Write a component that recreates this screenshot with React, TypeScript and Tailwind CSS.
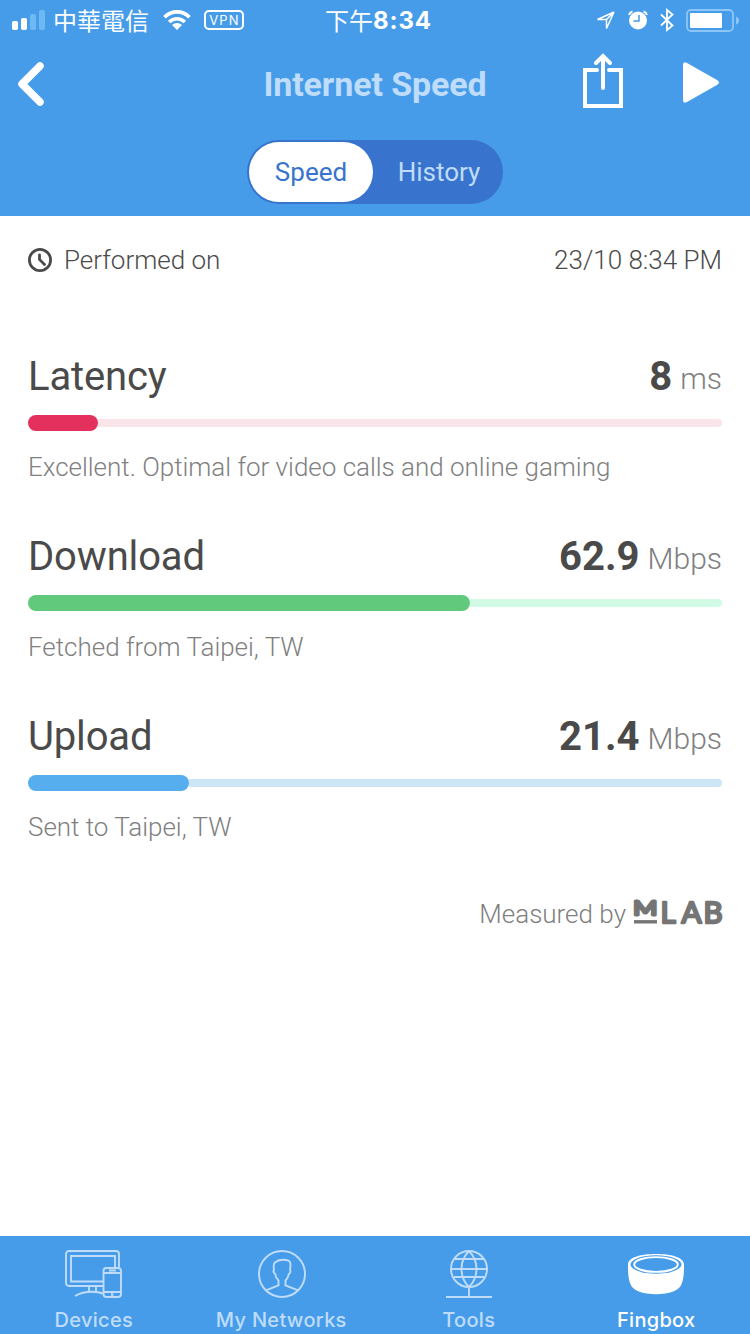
import React, { useState } from "react";

const metrics = [
  {
    name: "Latency",
    value: "8",
    unit: "ms",
    note: "Excellent. Optimal for video calls and online gaming",
    fill: 70,
    bar: "bg-[#e4305c]",
    track: "bg-[#f9e4ea]",
  },
  {
    name: "Download",
    value: "62.9",
    unit: "Mbps",
    note: "Fetched from Taipei, TW",
    fill: 442,
    bar: "bg-[#61c97b]",
    track: "bg-[#d1fbe5]",
  },
  {
    name: "Upload",
    value: "21.4",
    unit: "Mbps",
    note: "Sent to Taipei, TW",
    fill: 161,
    bar: "bg-[#56aeee]",
    track: "bg-[#cce6f8]",
  },
];

const DevicesIcon = () => (
  <svg width="58" height="50" viewBox="0 0 58 50" fill="none" stroke="currentColor" strokeWidth="1.9">
    <path d="M38 36H4a3 3 0 0 1-3-3V4a3 3 0 0 1 3-3h47a3 3 0 0 1 3 3v13" />
    <path d="M38 31.500H6V6h44v11" />
    <path d="M24 36v5.500M31 36v5.500M10 46c5-3 10-4.300 17-4.300s8 .6 11 2" />
    <rect x="38.500" y="18" width="17.500" height="29" rx="3" />
    <path d="M39 23h17M39 42h17M44 20.500h7" />
    <rect x="46" y="43.300" width="2.500" height="2.500" fill="currentColor" stroke="none" />
  </svg>
);

const NetworksIcon = () => (
  <svg className="ml-px" width="48" height="50" viewBox="0 0 48 50" fill="none" stroke="currentColor" strokeWidth="1.9">
    <circle cx="24" cy="24" r="23" />
    <path d="M8 40.300 20.500 35.300V30.500C18.500 28.500 17.500 26.500 17.200 24C15.600 23 15.300 21 16 19.700C15 14 16.500 12 18.500 11.700C21 9 30 9 32 12C33 15 32.300 17.500 32 19.700C32.800 21 32.400 23 30.800 24C30.500 26.500 29.500 28.500 27.500 30.500V35.300L40 40.300" />
  </svg>
);

const ToolsIcon = () => (
  <svg width="46" height="50" viewBox="0 0 46 50" fill="none" stroke="currentColor" strokeWidth="1.9">
    <circle cx="23" cy="19" r="18" />
    <path d="M23 1c-10 10-10 26 0 36M23 1c10 10 10 26 0 36M8 9h30M5 19h36M8 27h30M23 37v10M0 47h46" />
  </svg>
);

const FingboxIcon = () => (
  <svg width="56" height="50" viewBox="0 0 56 50" fill="none">
    <path d="M0 14C1 7 13 4 28 4s27 3 28 10c.2 6-.2 14-2 19-2 8-13 11.200-26 11.200S4 41 2 33C.2 28-.2 20 0 14Z" fill="white" />
    <ellipse cx="28" cy="14.500" rx="25.500" ry="9.300" fill="#469ce9" />
    <ellipse cx="28" cy="14.500" rx="21.800" ry="7.400" stroke="white" strokeWidth="1.900" />
  </svg>
);

const tabs = [
  { label: "Devices", icon: DevicesIcon },
  { label: "My Networks", icon: NetworksIcon },
  { label: "Tools", icon: ToolsIcon },
  { label: "Fingbox", icon: FingboxIcon },
];

const StatusBar = () => (
  <div className="grid h-10 grid-cols-3 items-center">
    <div className="flex items-center pl-3">
      <svg width="33" height="20" viewBox="0 0 33 20" fill="white">
        <rect y="11" width="6" height="9" rx="1.800" />
        <rect x="9" y="8" width="6" height="12" rx="1.800" />
        <rect x="18" y="4" width="6" height="16" rx="1.800" fill="#6cb9f3" />
        <rect x="27" width="6" height="20" rx="1.800" fill="#6cb9f3" />
      </svg>
      <span className="ml-2 font-['Noto_Sans_CJK_TC',sans-serif] text-2xl leading-10 whitespace-nowrap">
        中華電信
      </span>
      <svg className="ml-[14px]" width="28" height="20" viewBox="0 0 28 20" fill="none" stroke="white" strokeWidth="3.700">
        <path d="M1.500 7.200a17.500 17.500 0 0 1 25 0M6.200 12a11 11 0 0 1 15.600 0" />
        <path d="m14 20-5-5a7.200 7.200 0 0 1 10 0Z" fill="white" stroke="none" />
      </svg>
      <span className="ml-[13px] flex h-5 w-10 items-center justify-center rounded-[5px] border-2 border-white pl-px font-[Inter,sans-serif] text-[13px] leading-none tracking-[1.2px]">
        VPN
      </span>
    </div>
    <div className="flex items-center justify-center pl-[7px] whitespace-nowrap">
      <span className="font-['Noto_Sans_CJK_TC',sans-serif] text-2xl leading-10">下午</span>
      <span className="pt-0.5 font-[Inter,sans-serif] text-2xl leading-[38px] font-bold tracking-[0.9px]">8:34</span>
    </div>
    <div className="flex items-center justify-end pr-[11px]">
      <svg width="20" height="20" viewBox="0 0 20 20" fill="none" stroke="white" strokeWidth="1.500">
        <path d="M18 2 1.500 9.500h9v9L18 2l-7.500 7.500" />
      </svg>
      <svg className="ml-3" width="20" height="20" viewBox="0 0 20 20">
        <circle cx="10" cy="10.500" r="9" fill="white" />
        <path d="M11 5v6H5.500" fill="none" stroke="#469ce9" strokeWidth="1.500" />
        <path d="M1 5a5 5 0 0 1 3.500-3.500M19 5a5 5 0 0 0-3.500-3.500" fill="none" stroke="white" strokeWidth="2" />
      </svg>
      <svg className="ml-3" width="14" height="24" viewBox="0 0 14 24" fill="none" stroke="white" strokeWidth="1.800">
        <path d="m1 6.500 11.500 11L7 22V2l5.500 4.500L1 17.500" />
      </svg>
      <svg className="mt-px ml-3" width="53" height="24" viewBox="0 0 53 24">
        <rect x="1" y="1" width="46" height="21" rx="4" fill="none" stroke="#8bc6f7" strokeWidth="1.800" />
        <rect x="4" y="4" width="32" height="15" rx="1" fill="white" />
        <path d="M50 7.500q3 1 3 4t-3 4Z" fill="#8bc6f7" />
      </svg>
    </div>
  </div>
);

const App = () => {
  const [view, setView] = useState("Speed");
  const [activeTab, setActiveTab] = useState("Fingbox");

  return (
    <div className="flex h-[1334px] w-[750px] flex-col overflow-hidden bg-white font-[Roboto,sans-serif] text-[#4a4a4a]">
      {/* Header */}
      <header className="h-[216px] shrink-0 bg-[#469ce9] text-white">
        <StatusBar />
        <div className="grid h-[88px] grid-cols-[1fr_auto_1fr] items-center">
          <button aria-label="Back" className="w-fit pl-[17px]">
            <svg width="28" height="46" viewBox="0 0 28 46" fill="none" stroke="white" strokeWidth="7.500" strokeLinecap="round" strokeLinejoin="round">
              <path d="M23 5 5 23l18 18" />
            </svg>
          </button>
          <h1 className="text-[34px] leading-[40px] font-bold tracking-[-0.1px] text-[#bfdcfa]">
            Internet Speed
          </h1>
          <div className="flex items-center justify-end pr-[30px] pb-[3px]">
            <button aria-label="Share" className="mb-[3px]">
              <svg width="40" height="56" viewBox="0 0 40 56" fill="none" stroke="white" strokeWidth="4" strokeLinecap="round">
                <path d="M14 17H2v36h36V17H26M20 35V4M13 10l7-7 7 7" />
              </svg>
            </button>
            <button aria-label="Run" className="ml-[60px]">
              <svg width="37" height="42" viewBox="0 0 37 42" fill="white">
                <path d="M0 3Q0-1 4 1l30 17q4 2.500 0 5L4 40q-4 2-4-2Z" />
              </svg>
            </button>
          </div>
        </div>
        <div className="mx-auto mt-3 flex h-16 w-64 rounded-full bg-[#3874cd] p-0.5 text-[26px]">
          {["Speed", "History"].map((item) => (
            <button
              key={item}
              onClick={() => setView(item)}
              className={`h-[60px] rounded-full ${
                view === item ? "w-[124px] bg-white text-[#3874cd]" : "flex-1 pl-1 text-[#bfdcfa]"
              }`}
            >
              {item}
            </button>
          ))}
        </div>
      </header>

      {/* Results */}
      <main className="flex-1 px-7">
        <div className="mt-6 flex h-10 items-center text-[26px] font-light">
          <svg width="24" height="24" viewBox="0 0 24 24" fill="none" stroke="currentColor" strokeWidth="2.800" strokeLinecap="round">
            <circle cx="12" cy="12" r="10.600" />
            <path d="M11.500 7v4.500l5 5" />
          </svg>
          <span className="ml-3">Performed on</span>
          <span className="ml-auto">23/10 8:34 PM</span>
        </div>

        <div className="mt-[73px]">
          {metrics.map((metric) => (
            <section key={metric.name} className="h-[180px]">
              <div className="flex h-12 items-baseline justify-between leading-[48px]">
                <h2 className="text-[40px] tracking-[-0.15px]">{metric.name}</h2>
                <p>
                  <span className="text-[40px] font-bold">{metric.value}</span>
                  <span className="ml-2 inline-block -translate-y-px text-[30px] font-light text-[#808080]">
                    {metric.unit}
                  </span>
                </p>
              </div>
              <div className="mt-[14px] flex h-4 items-center">
                <div className={`h-4 rounded-full ${metric.bar}`} style={{ width: metric.fill }} />
                <div className={`h-2 flex-1 rounded-r-full ${metric.track}`} />
              </div>
              <p className="mt-4 text-[26px] leading-10 font-light tracking-[-0.02px] text-[#808080]">
                {metric.note}
              </p>
            </section>
          ))}
        </div>

        <div className="mt-px flex h-10 items-center justify-end text-[26px] font-light text-[#808080]">
          <span>Measured by</span>
          {/* M-Lab wordmark */}
          <svg
            className="mb-1.5 ml-[7px] overflow-visible font-[Lato,sans-serif] font-normal"
            width="89"
            height="40"
            viewBox="0 -8 89 40"
            fill="#757575"
            stroke="#757575"
            strokeWidth="2.400"
            strokeLinejoin="round"
          >
            <text x="0.200" y="16.300" fontSize="20" textLength="24" lengthAdjust="spacingAndGlyphs" strokeWidth="2.800">M</text>
            <text x="27.500 48.500 70.500" y="23.500" fontSize="29.500">LAB</text>
            <path d="M1 22.800h23" strokeWidth="3.400" />
          </svg>
        </div>
      </main>

      {/* Tab bar */}
      <nav className="grid h-[98px] shrink-0 grid-cols-4 bg-[#469ce9] pt-[14px]">
        {tabs.map(({ label, icon: Icon }) => (
          <button
            key={label}
            onClick={() => setActiveTab(label)}
            className={`flex flex-col items-center font-[Inter,sans-serif] text-xl font-medium tracking-[0.3px] ${
              activeTab === label ? "text-white" : "text-[#bfdcfa]"
            }`}
          >
            <Icon />
            <span className="mt-[6px] leading-7">{label}</span>
          </button>
        ))}
      </nav>
    </div>
  );
};

export default App;
